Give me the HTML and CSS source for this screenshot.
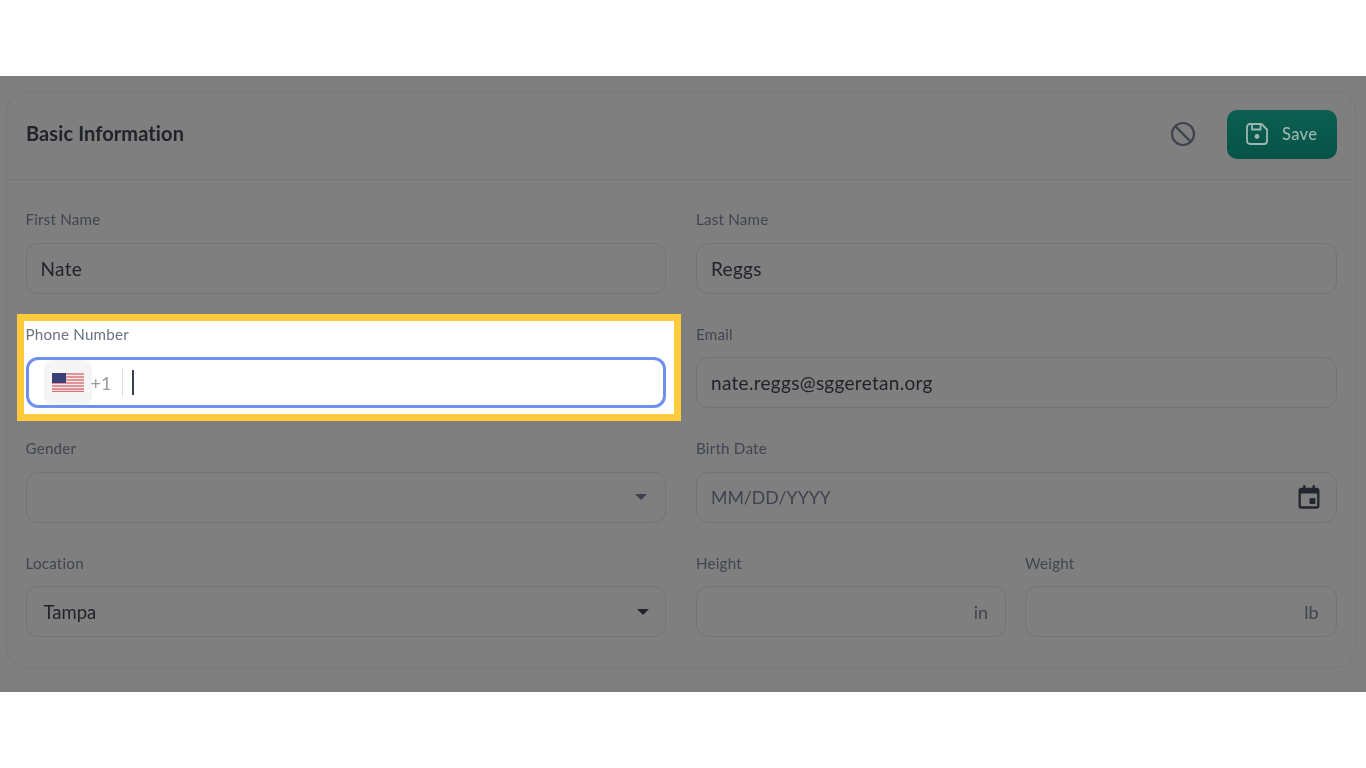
FILE: index.html
```html
<!DOCTYPE html>
<html lang="en">
<head>
<meta charset="utf-8">
<title>Basic Information</title>
<link rel="stylesheet" href="styles.css">
</head>
<body>
<main class="stage">
  <section class="card">
    <header class="card-head">
      <h1 class="title">Basic Information</h1>
      <div class="actions">
        <svg class="cancel" viewBox="0 0 26 26" width="26" height="26" aria-hidden="true">
          <circle cx="13" cy="13" r="11" fill="none" stroke="#3f434f" stroke-width="2.2"/>
          <path d="M5.4 5.4 20.6 20.6" fill="none" stroke="#3f434f" stroke-width="2.2"/>
        </svg>
        <button class="save" type="button">
          <svg viewBox="0 0 24 24" width="24" height="24" aria-hidden="true">
            <path d="M5 2h11.5L22 7.5V19a3 3 0 0 1-3 3H5a3 3 0 0 1-3-3V5a3 3 0 0 1 3-3Z" fill="none" stroke="#9db7b1" stroke-width="1.8" stroke-linejoin="round"/>
            <path d="M7 2v5.500h8.500V2" fill="none" stroke="#9db7b1" stroke-width="1.8"/>
            <circle cx="12" cy="14.500" r="2.400" fill="#9db7b1"/>
          </svg>
          <span>Save</span>
        </button>
      </div>
    </header>
    <div class="form">
      <div class="field">
        <label class="label">First Name</label>
        <div class="input"><span class="value">Nate</span></div>
      </div>
      <div class="field">
        <label class="label">Last Name</label>
        <div class="input"><span class="value">Reggs</span></div>
      </div>
      <div class="field spotlight">
        <label class="label">Phone Number</label>
        <div class="input phone">
          <span class="flag-chip">
            <svg viewBox="0 0 32 19" width="32" height="19" aria-hidden="true">
              <rect width="32" height="19" fill="#f4eaea"/>
              <path d="M0 1h32M0 4h32M0 7h32M0 10h32M0 13h32M0 16h32M0 18.500h32" stroke="#d9777f" stroke-width="1.500"/>
              <rect width="14" height="10" fill="#3b3f78"/>
            </svg>
          </span>
          <span class="dial">+1</span>
          <span class="divider"></span>
          <span class="caret"></span>
        </div>
      </div>
      <div class="field">
        <label class="label">Email</label>
        <div class="input"><span class="value">nate.reggs@sggeretan.org</span></div>
      </div>
      <div class="field">
        <label class="label">Gender</label>
        <div class="input select">
          <span class="value"></span>
          <span class="arrow arrow-dim"></span>
        </div>
      </div>
      <div class="field">
        <label class="label">Birth Date</label>
        <div class="input date">
          <span class="placeholder">MM/DD/YYYY</span>
          <svg viewBox="0 0 24 24" width="28" height="28" aria-hidden="true">
            <path d="M7 2h2v2h6V2h2v2h1.500A2.500 2.500 0 0 1 21 6.500v13a2.500 2.500 0 0 1-2.500 2.500h-13A2.500 2.500 0 0 1 3 19.500v-13A2.500 2.500 0 0 1 5.500 4H7V2Zm-2 7v10.500c0 .3.200.5.500.5h13c.3 0 .5-.2.500-.5V9H5Z" fill="#23262e"/>
            <rect x="12.500" y="13" width="5" height="5" fill="#23262e"/>
          </svg>
        </div>
      </div>
      <div class="field">
        <label class="label">Location</label>
        <div class="input select">
          <span class="value value-select">Tampa</span>
          <span class="arrow"></span>
        </div>
      </div>
      <div class="pair">
        <div class="field">
          <label class="label">Height</label>
          <div class="input unit"><span class="suffix">in</span></div>
        </div>
        <div class="field">
          <label class="label">Weight</label>
          <div class="input unit"><span class="suffix">lb</span></div>
        </div>
      </div>
    </div>
  </section>
</main>
</body>
</html>
```
FILE: styles.css
```css
* { box-sizing: border-box; }
html, body { margin: 0; background: #fff; }
body { font-family: Lato, "Noto Sans", sans-serif; height: 768px; overflow: hidden; }

.stage {
  margin-top: 76px;
  height: 616px;
  background: #7e7e7e;
  padding: 15px 10px 24px 6px;
  filter: blur(.35px);
}
.card {
  height: 577px;
  border: 1px solid #787878;
  border-radius: 22px;
  background: #7f7f7f;
}
.card-head {
  height: 88px;
  padding: 0 18px 3px 19px;
  display: flex;
  align-items: center;
  justify-content: space-between;
  border-bottom: 1px solid #767676;
}
.title {
  margin: 0 0 2px;
  font-size: 20px;
  font-weight: 700;
  color: #20232a;
  letter-spacing: .1px;
}
.actions { display: flex; align-items: center; gap: 31px; }
.cancel { display: block; }
.save {
  width: 110px;
  height: 49px;
  border: 0;
  border-radius: 10px;
  background: linear-gradient(#0b5f51, #075348);
  display: flex;
  align-items: center;
  gap: 13px;
  padding: 0 0 0 18px;
  color: #9db7b1;
  font: 500 16.500px Lato, sans-serif;
  letter-spacing: .3px;
}

.form {
  display: grid;
  grid-template-columns: 1fr 1fr;
  column-gap: 30px;
  row-gap: 31.100px;
  padding: 30px 18.500px 0;
}
.field { display: flex; flex-direction: column; gap: 14.500px; min-width: 0; position: relative; }
.label {
  height: 18px;
  line-height: 18px;
  font-size: 15.200px;
  color: #40454f;
  letter-spacing: .2px;
}
.input {
  height: 51px;
  border: 1.500px solid #737373;
  border-radius: 12px;
  display: flex;
  align-items: center;
  padding: 0 14px;
}
.value { font-size: 19px; color: #1f2228; letter-spacing: .3px; }
.value-select { margin-left: 3px; letter-spacing: 0; font-size: 18.500px; }
.placeholder { font-size: 17.700px; color: #3f434d; }

.select, .date, .unit { justify-content: space-between; }
.date { padding-right: 13px; }
.unit { justify-content: flex-end; }
.suffix { font-size: 18px; color: #3f434d; margin-right: 3px; }

.arrow {
  width: 0;
  height: 0;
  margin-right: 2px;
  border-left: 6px solid transparent;
  border-right: 6px solid transparent;
  border-top: 6px solid #20232a;
}
.arrow-dim { border-top-color: #3d414b; margin-right: 4px; }

.pair { display: grid; grid-template-columns: 310px 1fr; column-gap: 19px; min-width: 0; }

/* highlighted field sits on a white, yellow-framed spotlight */
.spotlight { z-index: 0; }
.spotlight::before {
  content: "";
  position: absolute;
  inset: -3.500px -8px -6px -2px;
  background: #fff;
  outline: 7px solid #ffcb3d;
  z-index: -1;
}
.spotlight .label { color: #6b7280; }
.spotlight .input { border: 3px solid #7090f0; background: #fff; padding-left: 15px; }
.flag-chip {
  width: 48px;
  height: 45px;
  border-radius: 9px;
  background: #f5f5f5;
  display: flex;
  align-items: center;
  justify-content: center;
}
.dial { margin-left: -1px; font-size: 18px; color: #9a9a9a; }
.divider { width: 1px; height: 29px; background: #ddd; margin-left: 11px; }
.caret { width: 2px; height: 25px; background: #3a3f4e; margin-left: 9px; }
```
